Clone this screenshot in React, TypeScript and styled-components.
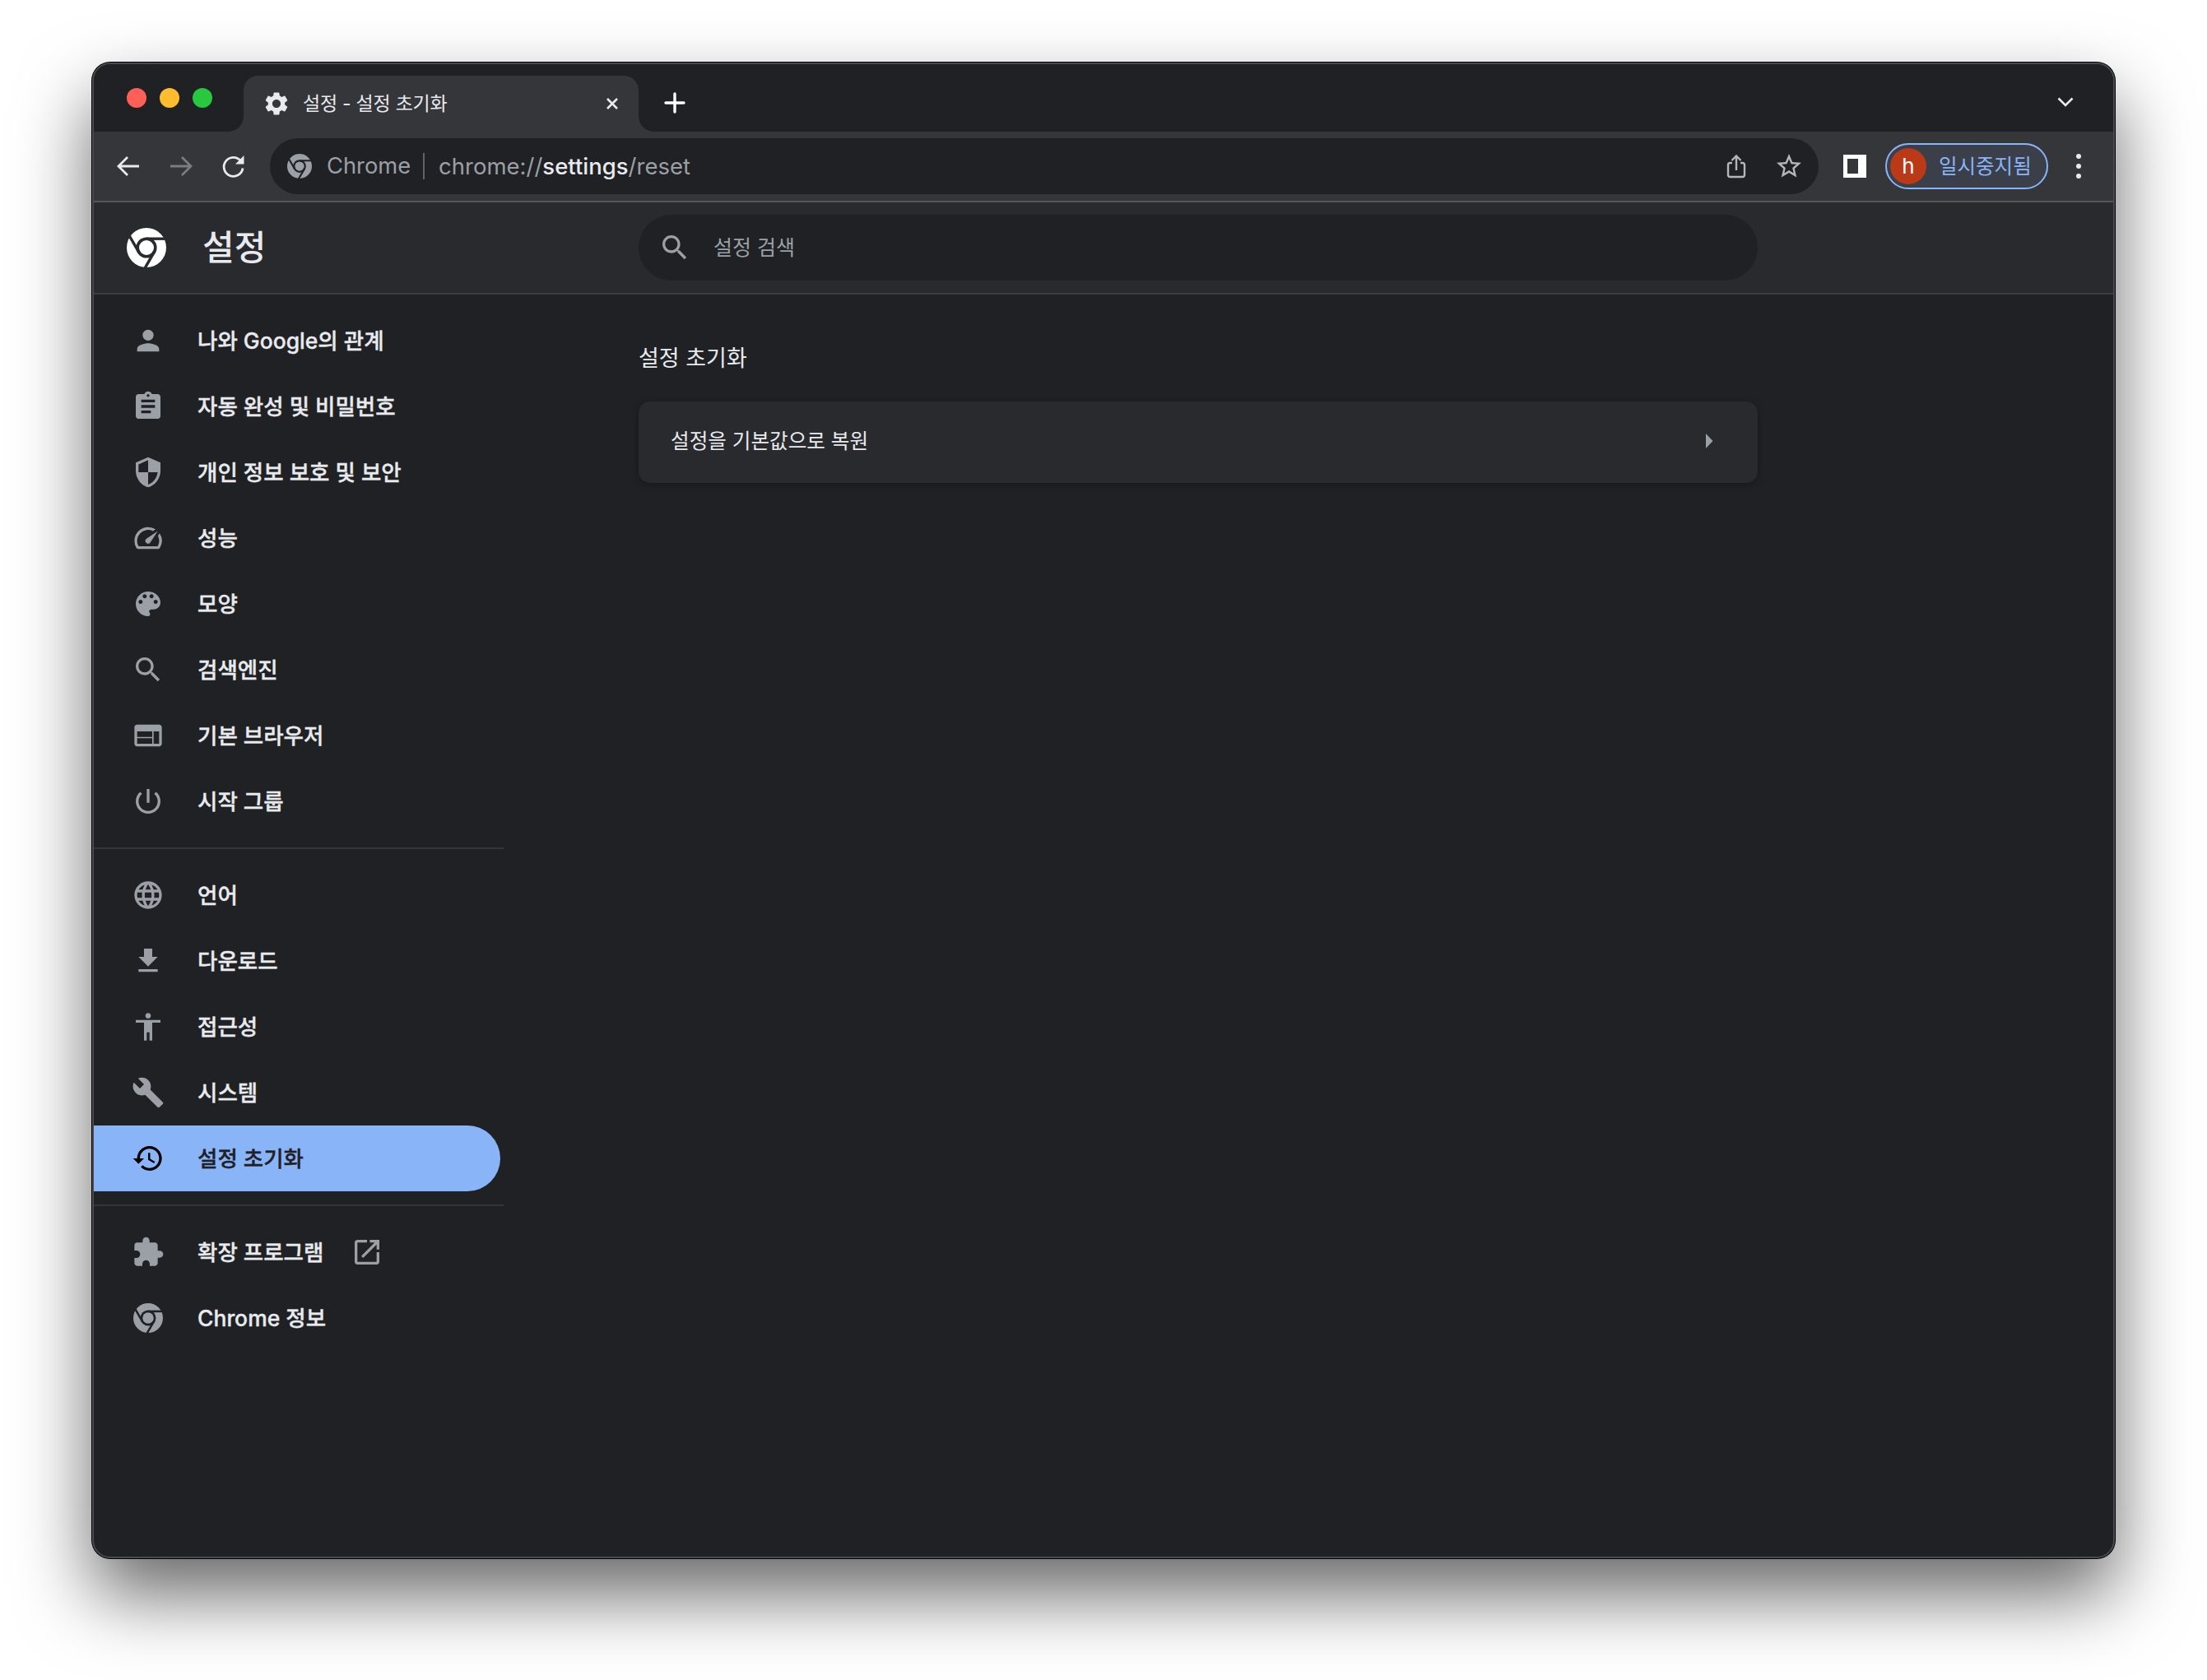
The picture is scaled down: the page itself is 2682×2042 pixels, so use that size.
import React from 'react';
import styled, { createGlobalStyle } from 'styled-components';

const FONT = `Inter, "Noto Sans CJK KR", sans-serif`;

const GlobalStyle = createGlobalStyle`
  html, body {
    margin: 0;
    padding: 0;
    background: #fff;
  }
  * {
    box-sizing: border-box;
  }
`;

type NavEntry = {
  label: string;
  icon: string;
  active?: boolean;
  external?: boolean;
  chrome?: boolean;
};

const ICONS = {
  person: 'M12 12c2.21 0 4-1.79 4-4s-1.79-4-4-4-4 1.79-4 4 1.79 4 4 4zm0 2c-2.67 0-8 1.34-8 4v2h16v-2c0-2.66-5.33-4-8-4z',
  assignment: 'M19 3h-4.18C14.4 1.84 13.3 1 12 1c-1.3 0-2.4.84-2.82 2H5c-1.1 0-2 .9-2 2v14c0 1.1.9 2 2 2h14c1.1 0 2-.9 2-2V5c0-1.1-.9-2-2-2zm-7 0c.55 0 1 .45 1 1s-.45 1-1 1-1-.45-1-1 .45-1 1-1zm2 14H7v-2h7v2zm3-4H7v-2h10v2zm0-4H7V7h10v2z',
  security: 'M12 1L3 5v6c0 5.55 3.84 10.74 9 12 5.16-1.26 9-6.45 9-12V5l-9-4zm0 10.99h7c-.53 4.12-3.28 7.79-7 8.94V12H5V6.3l7-3.11v8.8z',
  speed: 'M20.38 8.57l-1.23 1.85a8 8 0 0 1-.22 7.58H5.07A8 8 0 0 1 15.58 6.85l1.85-1.23A10 10 0 0 0 3.35 19a2 2 0 0 0 1.72 1h13.85a2 2 0 0 0 1.74-1 10 10 0 0 0-.27-10.44zm-9.79 6.84a2 2 0 0 0 2.83 0l5.66-8.49-8.49 5.66a2 2 0 0 0 0 2.83z',
  palette: 'M12 3c-4.97 0-9 4.03-9 9s4.03 9 9 9c.83 0 1.5-.67 1.5-1.5 0-.39-.15-.74-.39-1.01-.23-.26-.38-.61-.38-.99 0-.83.67-1.5 1.5-1.5H16c2.76 0 5-2.24 5-5 0-4.42-4.03-8-9-8zm-5.5 9c-.83 0-1.5-.67-1.5-1.5S5.67 9 6.5 9 8 9.67 8 10.5 7.33 12 6.5 12zm3-4C8.67 8 8 7.33 8 6.5S8.67 5 9.5 5s1.5.67 1.5 1.5S10.33 8 9.5 8zm5 0c-.83 0-1.5-.67-1.5-1.5S13.67 5 14.5 5s1.5.67 1.5 1.5S15.33 8 14.5 8zm3 4c-.83 0-1.5-.67-1.5-1.5S16.67 9 17.5 9s1.5.67 1.5 1.5-.67 1.5-1.5 1.5z',
  search: 'M15.5 14h-.79l-.28-.27C15.41 12.59 16 11.11 16 9.5 16 5.91 13.09 3 9.5 3S3 5.91 3 9.5 5.91 16 9.5 16c1.61 0 3.09-.59 4.23-1.57l.27.28v.79l5 4.99L20.49 19l-4.99-5zm-6 0C7.01 14 5 11.99 5 9.5S7.01 5 9.5 5 14 7.01 14 9.5 11.99 14 9.5 14z',
  web: 'M20 4H4c-1.1 0-1.99.9-1.99 2L2 18c0 1.1.9 2 2 2h16c1.1 0 2-.9 2-2V6c0-1.1-.9-2-2-2zm-5 14H4v-4h11v4zm0-5H4V9h11v4zm5 5h-4V9h4v9z',
  power: 'M13 3h-2v10h2V3zm4.83 2.17l-1.42 1.42C17.99 7.86 19 9.81 19 12c0 3.87-3.13 7-7 7s-7-3.13-7-7c0-2.19 1.01-4.14 2.58-5.42L6.17 5.17C4.23 6.82 3 9.26 3 12c0 4.97 4.03 9 9 9s9-4.03 9-9c0-2.74-1.23-5.18-3.17-6.83z',
  language: 'M11.99 2C6.47 2 2 6.48 2 12s4.47 10 9.99 10C17.52 22 22 17.52 22 12S17.52 2 11.99 2zm6.93 6h-2.95c-.32-1.25-.78-2.45-1.38-3.56 1.84.63 3.37 1.91 4.33 3.56zM12 4.04c.83 1.2 1.48 2.53 1.91 3.96h-3.82c.43-1.43 1.08-2.76 1.91-3.96zM4.26 14C4.1 13.36 4 12.69 4 12s.1-1.36.26-2h3.38c-.08.66-.14 1.32-.14 2 0 .68.06 1.34.14 2H4.26zm.82 2h2.95c.32 1.25.78 2.45 1.38 3.56-1.84-.63-3.37-1.9-4.33-3.56zm2.95-8H5.08c.96-1.66 2.49-2.93 4.33-3.56C8.81 5.55 8.35 6.75 8.03 8zM12 19.96c-.83-1.2-1.48-2.53-1.91-3.96h3.82c-.43 1.43-1.08 2.76-1.91 3.96zM14.34 14H9.66c-.09-.66-.16-1.32-.16-2 0-.68.07-1.35.16-2h4.68c.09.65.16 1.32.16 2 0 .68-.07 1.34-.16 2zm.25 5.56c.6-1.11 1.06-2.31 1.38-3.56h2.95c-.96 1.65-2.49 2.93-4.33 3.56zM16.36 14c.08-.66.14-1.32.14-2 0-.68-.06-1.34-.14-2h3.38c.16.64.26 1.31.26 2s-.1 1.36-.26 2h-3.38z',
  download: 'M19 9h-4V3H9v6H5l7 7 7-7zM5 18v2h14v-2H5z',
  accessibility: 'M12 2c1.1 0 2 .9 2 2s-.9 2-2 2-2-.9-2-2 .9-2 2-2zm9 7h-6v13h-2v-6h-2v6H9V9H3V7h18v2z',
  build: 'M22.7 19l-9.1-9.1c.9-2.3.4-5-1.5-6.9-2-2-5-2.4-7.4-1.3L9 6 6 9 1.6 4.7C.4 7.1.9 10.1 2.9 12.1c1.9 1.9 4.6 2.4 6.9 1.5l9.1 9.1c.4.4 1 .4 1.4 0l2.3-2.3c.5-.4.5-1.1.1-1.4z',
  restore: 'M13 3c-4.97 0-9 4.03-9 9H1l3.89 3.89.07.14L9 12H6c0-3.87 3.13-7 7-7s7 3.13 7 7-3.13 7-7 7c-1.93 0-3.68-.79-4.94-2.06l-1.42 1.42C8.27 19.99 10.51 21 13 21c4.97 0 9-4.03 9-9s-4.03-9-9-9zm-1 5v5l4.28 2.54.72-1.21-3.5-2.08V8H12z',
  extension: 'M20.5 11H19V7c0-1.1-.9-2-2-2h-4V3.5C13 2.12 11.88 1 10.5 1S8 2.12 8 3.5V5H4c-1.1 0-1.99.9-1.99 2v3.8H3.5c1.49 0 2.7 1.21 2.7 2.7s-1.21 2.7-2.7 2.7H2V20c0 1.1.9 2 2 2h3.8v-1.5c0-1.49 1.21-2.7 2.7-2.7 1.49 0 2.7 1.21 2.7 2.7V22H17c1.1 0 2-.9 2-2v-4h1.5c1.38 0 2.5-1.12 2.5-2.5S21.88 11 20.5 11z',
  openNew: 'M19 19H5V5h7V3H5c-1.11 0-2 .9-2 2v14c0 1.1.89 2 2 2h14c1.1 0 2-.9 2-2v-7h-2v7zM14 3v2h3.59l-9.83 9.83 1.41 1.41L19 6.41V10h2V3h-7z',
  settings: 'M19.14 12.94c.04-.3.06-.61.06-.94 0-.32-.02-.64-.07-.94l2.03-1.58c.18-.14.23-.41.12-.61l-1.92-3.32c-.12-.22-.37-.29-.59-.22l-2.39.96c-.5-.38-1.03-.7-1.62-.94l-.36-2.54c-.04-.24-.24-.41-.48-.41h-3.84c-.24 0-.43.17-.47.41l-.36 2.54c-.59.24-1.13.57-1.62.94l-2.39-.96c-.22-.08-.47 0-.59.22L2.74 8.87c-.12.21-.08.47.12.61l2.03 1.58c-.05.3-.09.63-.09.94s.02.64.07.94l-2.03 1.58c-.18.14-.23.41-.12.61l1.92 3.32c.12.22.37.29.59.22l2.39-.96c.5.38 1.03.7 1.62.94l.36 2.54c.05.24.24.41.48.41h3.84c.24 0 .44-.17.47-.41l.36-2.54c.59-.24 1.13-.56 1.62-.94l2.39.96c.22.08.47 0 .59-.22l1.92-3.32c.12-.22.07-.47-.12-.61l-2.01-1.58zM12 15.6c-1.98 0-3.6-1.62-3.6-3.6s1.62-3.6 3.6-3.6 3.6 1.62 3.6 3.6-1.62 3.6-3.6 3.6z',
  star: 'M22 9.24l-7.19-.62L12 2 9.19 8.63 2 9.24l5.46 4.73L5.82 21 12 17.27 18.18 21l-1.63-7.03L22 9.24zM12 15.4l-3.76 2.27 1-4.28-3.32-2.88 4.38-.38L12 6.1l1.71 4.04 4.38.38-3.32 2.88 1 4.28L12 15.4z',
};

const NAV_TOP: NavEntry[] = [
  { label: '나와 Google의 관계', icon: ICONS.person },
  { label: '자동 완성 및 비밀번호', icon: ICONS.assignment },
  { label: '개인 정보 보호 및 보안', icon: ICONS.security },
  { label: '성능', icon: ICONS.speed },
  { label: '모양', icon: ICONS.palette },
  { label: '검색엔진', icon: ICONS.search },
  { label: '기본 브라우저', icon: ICONS.web },
  { label: '시작 그룹', icon: ICONS.power },
];

const NAV_MIDDLE: NavEntry[] = [
  { label: '언어', icon: ICONS.language },
  { label: '다운로드', icon: ICONS.download },
  { label: '접근성', icon: ICONS.accessibility },
  { label: '시스템', icon: ICONS.build },
  { label: '설정 초기화', icon: ICONS.restore, active: true },
];

const NAV_BOTTOM: NavEntry[] = [
  { label: '확장 프로그램', icon: ICONS.extension, external: true },
  { label: 'Chrome 정보', icon: '', chrome: true },
];

type GlyphProps = {
  d: string;
  size: number;
  color: string;
};

const Glyph = ({ d, size, color }: GlyphProps) => (
  <svg width={size} height={size} viewBox="0 0 24 24" fill={color}>
    <path d={d} />
  </svg>
);

type ChromeLogoProps = {
  size: number;
  color: string;
  cut: string;
};

// disc, ring and the three tangent cuts, cut colour = whatever sits behind it
const ChromeLogo = ({ size, color, cut }: ChromeLogoProps) => (
  <svg width={size} height={size} viewBox="0 0 24 24">
    <circle cx="12" cy="12" r="12" fill={color} />
    <circle cx="12" cy="12" r="6.3" fill={cut} />
    <circle cx="12" cy="12" r="4.5" fill={color} />
    <g stroke={cut} strokeWidth="1.7">
      <path d="M12 6.6H23.5" />
      <path d="M12 6.6H23.5" transform="rotate(120 12 12)" />
      <path d="M12 6.6H23.5" transform="rotate(240 12 12)" />
    </g>
  </svg>
);

const NavRow = ({ entry }: { entry: NavEntry }) => (
  <Row $active={entry.active}>
    <RowIcon>
      {entry.chrome ? (
        <ChromeLogo size={36} color="#9aa0a6" cut="#202124" />
      ) : (
        <Glyph d={entry.icon} size={40} color={entry.active ? '#000000' : '#9aa0a6'} />
      )}
    </RowIcon>
    <RowLabel>{entry.label}</RowLabel>
    {entry.external && (
      <ExternalMark>
        <Glyph d={ICONS.openNew} size={40} color="#9aa0a6" />
      </ExternalMark>
    )}
  </Row>
);

const App = () => (
  <Page>
    <GlobalStyle />
    <BrowserWindow>
      <TabStrip>
        <TrafficLights>
          <Light $color="#ff5f57" />
          <Light $color="#febc2e" />
          <Light $color="#28c840" />
        </TrafficLights>
        <Tab>
          <Glyph d={ICONS.settings} size={34} color="#e8eaed" />
          <TabTitle>설정 - 설정 초기화</TabTitle>
          <svg width="16" height="16" viewBox="0 0 16 16" stroke="#e8eaed" strokeWidth="2.6">
            <path d="M2 2L14 14M14 2L2 14" />
          </svg>
        </Tab>
        <NewTab>
          <svg width="26" height="26" viewBox="0 0 26 26" stroke="#fff" strokeWidth="3.4" strokeLinecap="round">
            <path d="M13 2V24M2 13H24" />
          </svg>
        </NewTab>
        <TabSearch>
          <svg width="20" height="12" viewBox="0 0 20 12" fill="none" stroke="#e8eaed" strokeWidth="2.6">
            <path d="M1.5 1.5L10 10L18.5 1.5" />
          </svg>
        </TabSearch>
      </TabStrip>

      <Toolbar>
        <ToolButton>
          <svg width="32" height="32" viewBox="0 0 32 32" fill="none" stroke="#e8eaed" strokeWidth="2.8">
            <path d="M29 16H4.5M15 5L4 16L15 27" />
          </svg>
        </ToolButton>
        <ToolButton>
          <svg width="32" height="32" viewBox="0 0 32 32" fill="none" stroke="#7a7c80" strokeWidth="2.8">
            <path d="M3 16H27.5M17 5L28 16L17 27" />
          </svg>
        </ToolButton>
        <ToolButton>
          <svg width="32" height="32" viewBox="0 0 32 32" fill="none">
            <path d="M24.5 9.5A11.5 11.5 0 1 0 27 18.5" stroke="#e8eaed" strokeWidth="2.8" />
            <path d="M28.5 3V13.5H18Z" fill="#e8eaed" />
          </svg>
        </ToolButton>
        <Omnibox>
          <ChromeLogo size={30} color="#9aa0a6" cut="#202124" />
          <SiteChip>Chrome</SiteChip>
          <UrlDivider />
          <Url>
            chrome://<strong>settings</strong>/reset
          </Url>
          <OmniboxActions>
            <OmniboxAction>
              <svg width="24" height="30" viewBox="0 0 24 30" fill="none" stroke="#b4b6b8" strokeWidth="2.4">
                <path d="M7 11H4.5A2.5 2.5 0 0 0 2 13.5V25.5A2.5 2.5 0 0 0 4.5 28H19.5A2.5 2.5 0 0 0 22 25.5V13.5A2.5 2.5 0 0 0 19.5 11H17" />
                <path d="M12 20V3M6.5 8L12 2.5L17.5 8" />
              </svg>
            </OmniboxAction>
            <OmniboxAction>
              <Glyph d={ICONS.star} size={36} color="#b4b6b8" />
            </OmniboxAction>
          </OmniboxActions>
        </Omnibox>
        <SidePanelButton />
        <ProfilePill>
          <Avatar>h</Avatar>
          <ProfileLabel>일시중지됨</ProfileLabel>
        </ProfilePill>
        <MenuDots>
          <Dot />
          <Dot />
          <Dot />
        </MenuDots>
      </Toolbar>

      <SettingsHeader>
        <Brand>
          <ChromeLogo size={48} color="#ffffff" cut="#292a2d" />
          <BrandTitle>설정</BrandTitle>
        </Brand>
        <SearchBox>
          <Glyph d={ICONS.search} size={40} color="#9aa0a6" />
          <SearchPlaceholder>설정 검색</SearchPlaceholder>
        </SearchBox>
      </SettingsHeader>

      <Body>
        <Sidebar>
          {NAV_TOP.map((entry) => (
            <NavRow key={entry.label} entry={entry} />
          ))}
          <NavDivider />
          {NAV_MIDDLE.map((entry) => (
            <NavRow key={entry.label} entry={entry} />
          ))}
          <NavDivider />
          {NAV_BOTTOM.map((entry) => (
            <NavRow key={entry.label} entry={entry} />
          ))}
        </Sidebar>
        <Main>
          <SectionTitle>설정 초기화</SectionTitle>
          <Card>
            <CardLabel>설정을 기본값으로 복원</CardLabel>
            <svg width="10" height="18" viewBox="0 0 10 18" fill="#9aa0a6">
              <path d="M1 0L9.5 9L1 18Z" />
            </svg>
          </Card>
        </Main>
      </Body>
    </BrowserWindow>
  </Page>
);

const Page = styled.div`
  width: 2682px;
  height: 2042px;
  padding: 76px 0 0 112px;
  overflow: hidden;
  background: #fff;
  font-family: ${FONT};
`;

const BrowserWindow = styled.div`
  display: flex;
  flex-direction: column;
  width: 2458px;
  height: 1818px;
  border: 2px solid #4a4b4e;
  border-radius: 22px;
  overflow: hidden;
  background: #202124;
  box-shadow: 0 0 0 1px #000, 0 44px 90px rgba(0, 0, 0, 0.6);
`;

const TabStrip = styled.div`
  display: flex;
  flex: 0 0 82px;
  align-items: flex-end;
  background: #202124;
`;

const TrafficLights = styled.div`
  display: flex;
  align-self: flex-start;
  gap: 16px;
  width: 182px;
  padding: 29px 0 0 40px;
`;

const Light = styled.span<{ $color: string }>`
  width: 24px;
  height: 24px;
  border-radius: 50%;
  background: ${(p) => p.$color};
`;

const Tab = styled.div`
  position: relative;
  display: flex;
  align-items: center;
  width: 480px;
  height: 68px;
  padding: 0 24px 0 23px;
  border-radius: 18px 18px 0 0;
  background: #35363a;

  &::before,
  &::after {
    content: '';
    position: absolute;
    bottom: 0;
    width: 18px;
    height: 18px;
  }

  &::before {
    left: -18px;
    background: radial-gradient(circle at 0 0, #202124 17.5px, #35363a 18px);
  }

  &::after {
    right: -18px;
    background: radial-gradient(circle at 100% 0, #202124 17.5px, #35363a 18px);
  }
`;

const TabTitle = styled.span`
  flex: 1;
  margin-left: 15px;
  color: #e8eaed;
  font-size: 23px;
  letter-spacing: -0.25px;
  line-height: 32px;
  white-space: nowrap;
`;

const NewTab = styled.div`
  display: flex;
  align-self: center;
  margin: 12px 0 0 31px;
`;

const TabSearch = styled.div`
  display: flex;
  align-self: center;
  margin: 10px 48px 0 auto;
`;

const Toolbar = styled.div`
  display: flex;
  flex: 0 0 86px;
  align-items: center;
  padding-left: 10px;
  border-bottom: 2px solid #55565a;
  background: #35363a;
`;

const ToolButton = styled.div`
  display: flex;
  flex: 0 0 64px;
  justify-content: center;
`;

const Omnibox = styled.div`
  display: flex;
  align-items: center;
  width: 1882px;
  height: 68px;
  margin-left: 12px;
  padding: 0 16px 0 21px;
  border-radius: 34px;
  background: #202124;
`;

const SiteChip = styled.span`
  margin-left: 18px;
  color: #9aa0a6;
  font-size: 27.3px;
  line-height: 34px;
`;

const UrlDivider = styled.span`
  width: 2px;
  height: 32px;
  margin: 0 17px 0 15px;
  background: #5f6368;
`;

const Url = styled.span`
  color: #9aa0a6;
  font-size: 27.5px;
  line-height: 34px;

  strong {
    color: #e8eaed;
    font-weight: 500;
  }
`;

const OmniboxActions = styled.div`
  display: flex;
  gap: 24px;
  margin-left: auto;
`;

const OmniboxAction = styled.div`
  display: flex;
  align-items: center;
  justify-content: center;
  width: 40px;
  height: 40px;
`;

const SidePanelButton = styled.div`
  width: 28px;
  height: 28px;
  margin-left: 30px;
  border: 5px solid #fff;
  border-right-width: 10px;
  background: #35363a;
`;

const ProfilePill = styled.div`
  display: flex;
  align-items: center;
  width: 198px;
  height: 56px;
  margin-left: 23px;
  padding-left: 4px;
  border: 2px solid #8ab4f8;
  border-radius: 28px;
  background: #3b3f49;
`;

const Avatar = styled.span`
  display: flex;
  align-items: center;
  justify-content: center;
  width: 44px;
  height: 44px;
  border-radius: 50%;
  background: #ba3a18;
  color: #fff;
  font-size: 26px;
  line-height: 44px;
`;

const ProfileLabel = styled.span`
  margin-left: 15px;
  color: #8ab4f8;
  font-size: 24.5px;
  line-height: 32px;
  white-space: nowrap;
`;

const MenuDots = styled.div`
  display: flex;
  flex-direction: column;
  gap: 6px;
  margin-left: 34px;
`;

const Dot = styled.span`
  width: 6px;
  height: 6px;
  border-radius: 50%;
  background: #e8eaed;
`;

const SettingsHeader = styled.div`
  display: flex;
  flex: 0 0 112px;
  align-items: center;
  border-bottom: 2px solid #3c3d40;
  background: #292a2d;
`;

const Brand = styled.div`
  display: flex;
  flex: 0 0 662px;
  align-items: center;
  gap: 44px;
  padding-left: 40px;
`;

const BrandTitle = styled.h1`
  margin: 0;
  color: #e8eaed;
  font-size: 42px;
  font-weight: 500;
  line-height: 48px;
`;

const SearchBox = styled.div`
  display: flex;
  align-items: center;
  gap: 27px;
  width: 1360px;
  height: 80px;
  padding-left: 24px;
  border-radius: 40px;
  background: #202124;
`;

const SearchPlaceholder = styled.span`
  color: #9aa0a6;
  font-size: 25px;
  line-height: 32px;
`;

const Body = styled.div`
  display: flex;
  flex: 1;
  min-height: 0;
`;

const Sidebar = styled.nav`
  display: flex;
  flex: 0 0 498px;
  flex-direction: column;
  padding-top: 16px;
`;

const Row = styled.div<{ $active?: boolean }>`
  display: flex;
  flex: 0 0 80px;
  align-items: center;
  width: 494px;
  padding-left: 42px;
  border-radius: 0 40px 40px 0;
  background: ${(p) => (p.$active ? '#8ab4f8' : 'transparent')};
  color: ${(p) => (p.$active ? '#202124' : '#e8eaed')};
`;

const RowIcon = styled.span`
  display: flex;
  flex: 0 0 48px;
  justify-content: center;
`;

const RowLabel = styled.span`
  margin-left: 36px;
  font-size: 26.5px;
  font-weight: 500;
  line-height: 34px;
  white-space: nowrap;
  -webkit-text-stroke: 0.35px currentColor;
`;

const ExternalMark = styled.span`
  display: flex;
  margin-left: 33px;
`;

const NavDivider = styled.div`
  flex: 0 0 2px;
  width: 500px;
  margin: 16px 0 16px -2px;
  background: #35363a;
`;

const Main = styled.main`
  flex: 0 0 1360px;
  margin-left: 164px;
  padding-top: 58px;
`;

const SectionTitle = styled.h2`
  margin: 0 0 32px;
  color: #e8eaed;
  font-size: 27px;
  font-weight: 400;
  line-height: 40px;
`;

const Card = styled.div`
  display: flex;
  align-items: center;
  justify-content: space-between;
  height: 99px;
  padding: 0 54px 3px 39px;
  border-radius: 14px;
  background: #292a2d;
  box-shadow: 0 2px 8px rgba(0, 0, 0, 0.3);
`;

const CardLabel = styled.span`
  color: #e8eaed;
  font-size: 24.6px;
  line-height: 32px;
`;

export default App;
